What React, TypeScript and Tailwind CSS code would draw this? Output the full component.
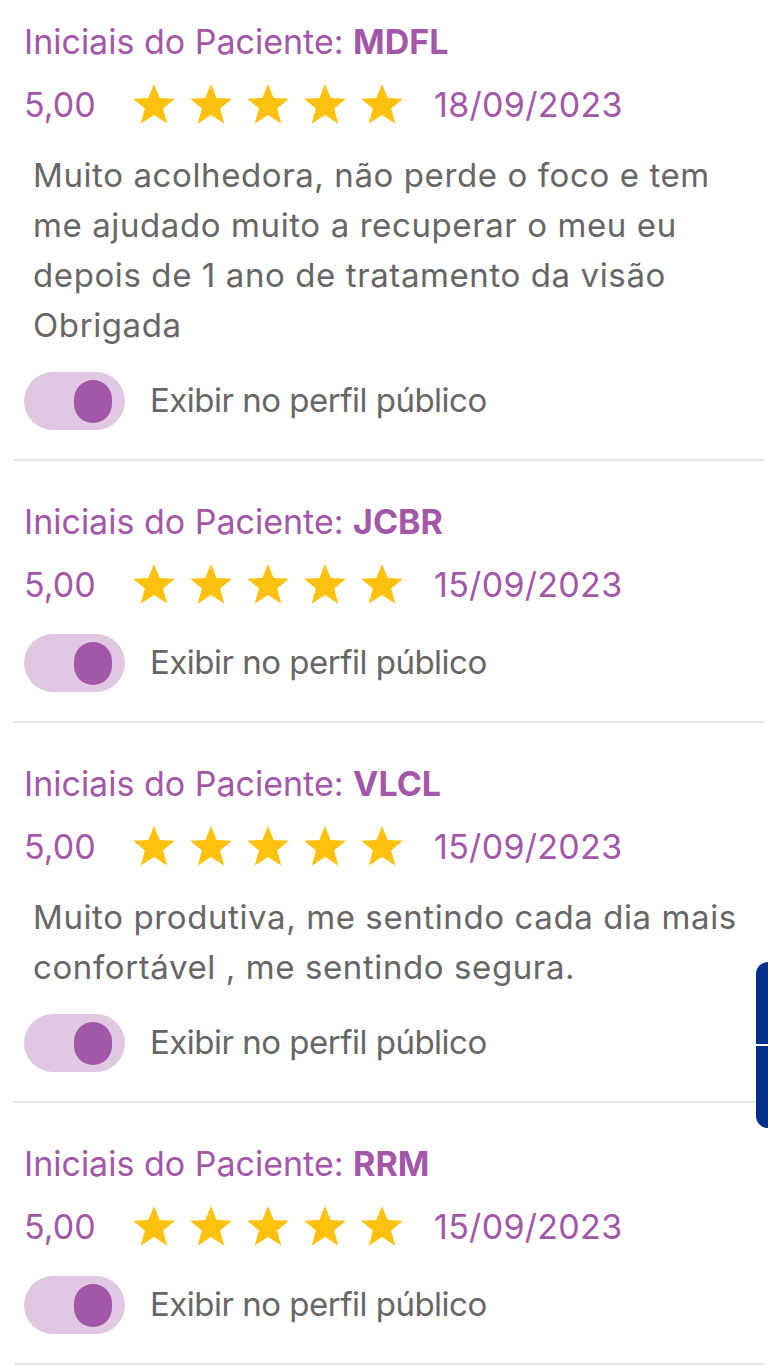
import React from "react";

type Review = { initials: string; date: string; text?: string[] };

const reviews: Review[] = [
  {
    initials: "MDFL",
    date: "18/09/2023",
    text: [
      "Muito acolhedora, não perde o foco e tem",
      "me ajudado muito a recuperar o meu eu",
      "depois de 1 ano de tratamento da visão",
      "Obrigada",
    ],
  },
  { initials: "JCBR", date: "15/09/2023" },
  {
    initials: "VLCL",
    date: "15/09/2023",
    text: ["Muito produtiva, me sentindo cada dia mais", "confortável , me sentindo segura."],
  },
  { initials: "RRM", date: "15/09/2023" },
];

function Star() {
  return (
    <svg width="44" height="42" viewBox="0 0 24 23" className="block">
      <polygon
        points="12,0.5 15.1,8.2 23.5,8.6 17,13.9 19.3,22.3 12,17.5 4.7,22.3 7,13.9 0.5,8.6 8.9,8.2"
        fill="#fdc10e"
      />
    </svg>
  );
}

function Card({ r, first }: { r: Review; first: boolean }) {
  return (
    <div className={first ? "pt-[21px]" : "pt-[40px]"}>
      <div className="px-[10px]">
        <div className="h-[40px] flex items-center text-[34px] text-[#a257a9] whitespace-nowrap">
          <span>Iniciais do Paciente:&nbsp;</span>
          <span className="font-bold">{r.initials}</span>
        </div>
        <div className="mt-[21px] h-[44px] flex items-center text-[34px] text-[#a257a9]">
          <span className="w-[108px]">5,00</span>
          <div className="flex gap-[13px]">
            <Star />
            <Star />
            <Star />
            <Star />
            <Star />
          </div>
          <span className="ml-[30px] tracking-[0.3px]">{r.date}</span>
        </div>
        {r.text && (
          <div className="mt-[24px] pl-[9px] text-[33px] leading-[50px] tracking-[0.6px] text-[#666666]">
            {r.text.map((t, i) => (
              <div key={i} className="whitespace-nowrap">
                {t}
              </div>
            ))}
          </div>
        )}
        <div className={(r.text ? "mt-[22px]" : "mt-[28px]") + " h-[58px] flex items-center"}>
          <div className="w-[101px] h-[58px] rounded-full bg-[#e0c8e2] flex items-center justify-end pr-[13px]">
            <div className="w-[38px] h-[43px] rounded-full bg-[#a257a9]" />
          </div>
          <span className="ml-[25px] text-[33px] text-[#666666] tracking-[-0.5px] whitespace-nowrap">
            Exibir no perfil público
          </span>
        </div>
      </div>
      <div className="mt-[29px] h-[2px] bg-[#e6e6e6]" />
    </div>
  );
}

export default function App() {
  return (
    <div
      className="relative w-[768px] h-[1365px] overflow-hidden bg-white"
      style={{ fontFamily: "Inter, 'Noto Sans', sans-serif" }}
    >
      <div className="px-[14px] pr-[4px]">
        {reviews.map((r, i) => (
          <Card key={i} r={r} first={i === 0} />
        ))}
      </div>
      <div className="absolute right-0 top-[962px] w-[12px] h-[166px] rounded-l-[12px] bg-[#003087] flex flex-col">
        <div className="flex-1" />
        <div className="h-[2px] bg-white" />
        <div className="flex-1" />
      </div>
    </div>
  );
}
